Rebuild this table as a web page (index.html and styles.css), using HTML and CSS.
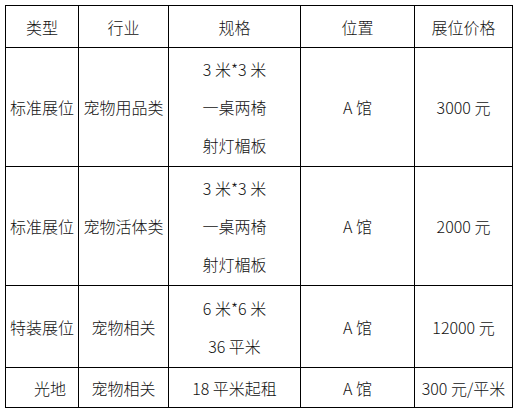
FILE: index.html
```html
<!DOCTYPE html>
<html lang="zh-CN">
<head>
<meta charset="utf-8">
<link rel="stylesheet" href="styles.css">
</head>
<body class="page">
<table class="price-table">
  <colgroup>
    <col class="c-type">
    <col class="c-ind">
    <col class="c-spec">
    <col class="c-loc">
    <col class="c-price">
  </colgroup>
  <thead>
    <tr class="row-head">
      <th>类型</th>
      <th>行业</th>
      <th>规格</th>
      <th>位置</th>
      <th>展位价格</th>
    </tr>
  </thead>
  <tbody>
    <tr class="row-tall">
      <td>标准展位</td>
      <td>宠物用品类</td>
      <td class="spec"><div>3 米*3 米</div><div>一桌两椅</div><div>射灯楣板</div></td>
      <td>A 馆</td>
      <td>3000 元</td>
    </tr>
    <tr class="row-tall">
      <td>标准展位</td>
      <td>宠物活体类</td>
      <td class="spec"><div>3 米*3 米</div><div>一桌两椅</div><div>射灯楣板</div></td>
      <td>A 馆</td>
      <td>2000 元</td>
    </tr>
    <tr class="row-mid">
      <td>特装展位</td>
      <td>宠物相关</td>
      <td class="spec"><div>6 米*6 米</div><div>36 平米</div></td>
      <td>A 馆</td>
      <td>12000 元</td>
    </tr>
    <tr class="row-short">
      <td><span class="indent">光地</span></td>
      <td>宠物相关</td>
      <td>18 平米起租</td>
      <td>A 馆</td>
      <td>300 元/平米</td>
    </tr>
  </tbody>
</table>
</body>
</html>
```

FILE: styles.css
```css
html, body {
  background: #ffffff;
}
.page {
  margin: 0;
  padding: 5px;
  font-family: "Noto Sans CJK SC", "Noto Sans", sans-serif;
  font-size: 16px;
  font-weight: 300;
  color: #111;
}
.price-table {
  border-collapse: collapse;
  table-layout: fixed;
  width: 507px;
}
.c-type { width: 73px; }
.c-ind { width: 90px; }
.c-spec { width: 132px; }
.c-loc { width: 114px; }
.c-price { width: 98px; }
.price-table th,
.price-table td {
  border: 1px solid #000;
  padding: 0;
  text-align: center;
  vertical-align: middle;
  font-weight: 300;
  white-space: nowrap;
  line-height: 20px;
}
.row-head { height: 42px; }
.row-tall { height: 119px; }
.row-mid { height: 82px; }
.row-short { height: 40px; }
.spec div {
  line-height: 38px;
}
.indent {
  padding-left: 16px;
}
```
